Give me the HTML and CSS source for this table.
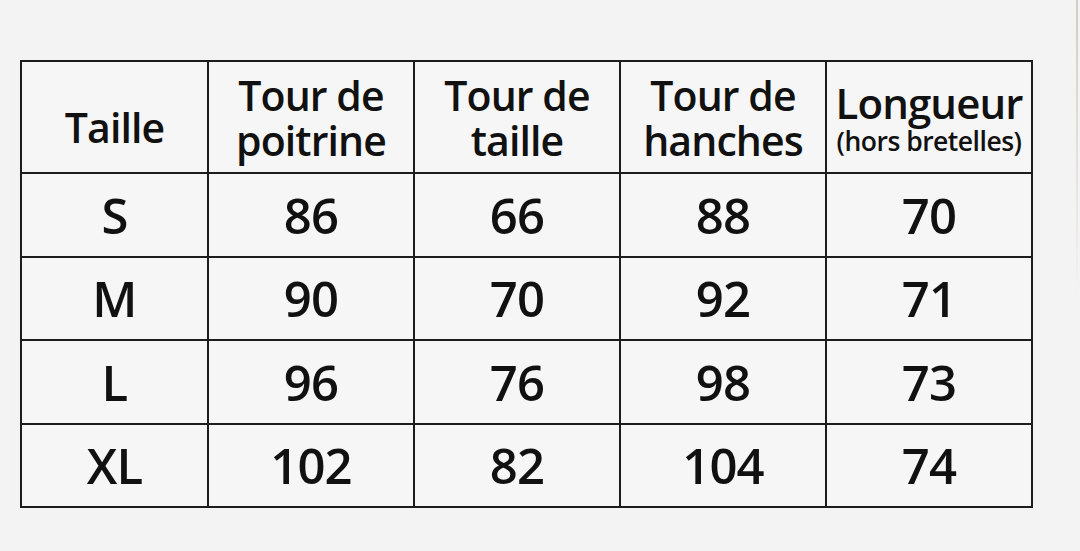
FILE: index.html
```html
<!DOCTYPE html>
<html lang="fr">
<head>
<meta charset="utf-8">
<title>Guide des tailles</title>
<link rel="stylesheet" href="styles.css">
</head>
<body>
<main class="page">
  <table class="sizes">
    <colgroup>
      <col class="c-size">
      <col class="c-val">
      <col class="c-val">
      <col class="c-val">
      <col class="c-val">
    </colgroup>
    <thead>
      <tr class="head">
        <th class="h-size">Taille</th>
        <th>Tour de<br>poitrine</th>
        <th>Tour de<br>taille</th>
        <th>Tour de<br>hanches</th>
        <th class="h-len"><span class="len-main">Longueur</span><span class="len-sub">(hors bretelles)</span></th>
      </tr>
    </thead>
    <tbody>
      <tr><td>S</td><td>86</td><td>66</td><td>88</td><td>70</td></tr>
      <tr><td>M</td><td>90</td><td>70</td><td>92</td><td>71</td></tr>
      <tr><td>L</td><td>96</td><td>76</td><td>98</td><td>73</td></tr>
      <tr><td>XL</td><td>102</td><td>82</td><td>104</td><td>74</td></tr>
    </tbody>
  </table>
</main>
</body>
</html>
```

FILE: styles.css
```css
html, body {
  margin: 0;
  padding: 0;
}
body {
  width: 1080px;
  height: 551px;
  overflow: hidden;
  background: #f3f3f3;
  font-family: "Open Sans", "Noto Sans", "Liberation Sans", sans-serif;
  color: #111;
}
.page {
  position: relative;
  height: 551px;
  padding: 60px 0 0 20px;
  box-sizing: border-box;
}
.page::after {
  content: "";
  position: absolute;
  left: 1076px;
  top: 0;
  width: 2px;
  height: 300px;
  background: linear-gradient(to bottom, #d6cbc3, rgba(214, 203, 195, 0));
}
.sizes {
  border-collapse: collapse;
  table-layout: fixed;
  width: 1011px;
  background: #f6f6f6;
}
.c-size { width: 187px; }
.c-val { width: 206px; }
.sizes th,
.sizes td {
  border: 2px solid #1c1c1c;
  padding: 0;
  text-align: center;
  vertical-align: middle;
}
.sizes th {
  height: 108px;
  font-weight: 600;
  font-size: 41px;
  line-height: 45px;
  letter-spacing: -0.9px;
  padding-top: 2px;
}
.sizes th.h-size {
  height: 90px;
  padding-top: 20px;
}
.h-len .len-main,
.h-len .len-sub {
  display: block;
}
.h-len .len-main {
  font-size: 42px;
  line-height: 44px;
  letter-spacing: -0.9px;
  margin-top: 2px;
}
.h-len .len-sub {
  font-size: 26.5px;
  line-height: 33px;
  letter-spacing: -0.5px;
}
.sizes td {
  height: 81.5px;
  font-size: 49px;
  line-height: 60px;
  font-weight: 600;
  letter-spacing: -0.8px;
}
```
